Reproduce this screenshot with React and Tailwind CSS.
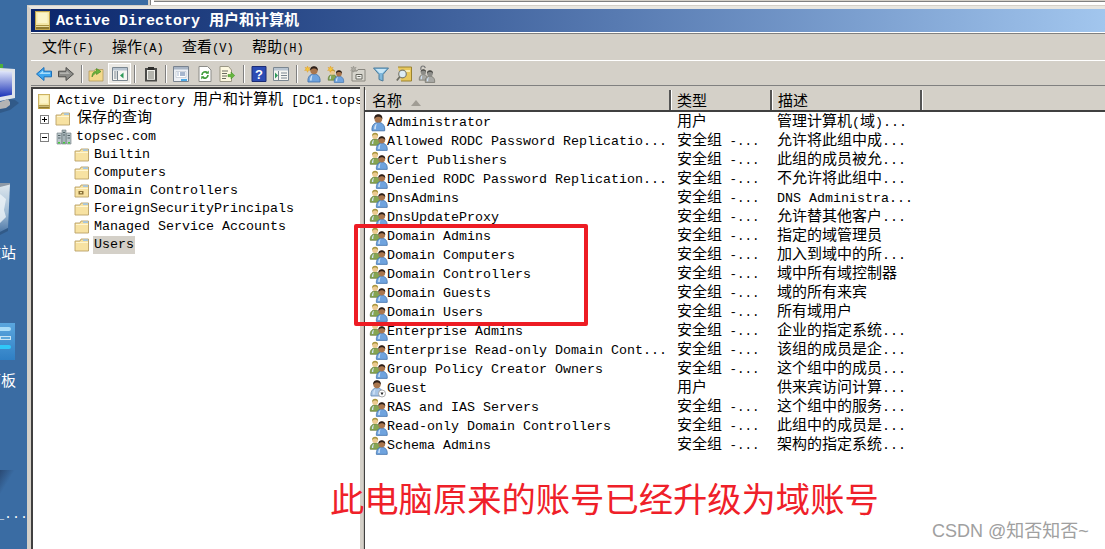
import React from 'react'

const groups = 'group'
const rows = [
  ['user', 'Administrator', '用户', '管理计算机(域)...'],
  [groups, 'Allowed RODC Password Replicatio...', '安全组 -...', '允许将此组中成...'],
  [groups, 'Cert Publishers', '安全组 -...', '此组的成员被允...'],
  [groups, 'Denied RODC Password Replication...', '安全组 -...', '不允许将此组中...'],
  [groups, 'DnsAdmins', '安全组 -...', 'DNS Administra...'],
  [groups, 'DnsUpdateProxy', '安全组 -...', '允许替其他客户...'],
  [groups, 'Domain Admins', '安全组 -...', '指定的域管理员'],
  [groups, 'Domain Computers', '安全组 -...', '加入到域中的所...'],
  [groups, 'Domain Controllers', '安全组 -...', '域中所有域控制器'],
  [groups, 'Domain Guests', '安全组 -...', '域的所有来宾'],
  [groups, 'Domain Users', '安全组 -...', '所有域用户'],
  [groups, 'Enterprise Admins', '安全组 -...', '企业的指定系统...'],
  [groups, 'Enterprise Read-only Domain Cont...', '安全组 -...', '该组的成员是企...'],
  [groups, 'Group Policy Creator Owners', '安全组 -...', '这个组中的成员...'],
  ['guest', 'Guest', '用户', '供来宾访问计算...'],
  [groups, 'RAS and IAS Servers', '安全组 -...', '这个组中的服务...'],
  [groups, 'Read-only Domain Controllers', '安全组 -...', '此组中的成员是...'],
  [groups, 'Schema Admins', '安全组 -...', '架构的指定系统...'],
]

const children = ['Builtin', 'Computers', 'Domain Controllers', 'ForeignSecurityPrincipals', 'Managed Service Accounts', 'Users']

// CJK runs are wider than the 8px latin cells
const Txt = ({ children: text }) =>
  text.split(/([\u4e00-\u9fff]+)/).map((part, i) =>
    i % 2 ? <span key={i} className="text-[15px]">{part}</span> : <React.Fragment key={i}>{part}</React.Fragment>
  )

const Svg = ({ children: kids, className = '' }) => (
  <svg viewBox="0 0 16 16" className={`w-4 h-4 shrink-0 overflow-visible ${className}`}>{kids}</svg>
)

const Person = ({ x = 0, y = 0, s = 1, body = '#6fa3de', edge = '#3c6ca6', skin = '#a9764e', hair = '#2c1f18' }) => (
  <g transform={`translate(${x} ${y}) scale(${s})`}>
    <path d="M1 16c-.6-5 2-8 6-8s6.600 3 6 8z" fill={body} stroke={edge} strokeWidth=".8" />
    <path d="M3 14.500c0-3 1-4.800 2.500-5.500-.6 2-.8 3.500-.8 5.500z" fill="#cfe2f6" />
    <circle cx="7" cy="4.500" r="3.700" fill={skin} />
    <path d="M3.200 4.800C2.800 1.500 5 .2 7 .2s4.200 1.300 3.800 4.600C10 3 8.400 2.500 7 2.500S4 3 3.200 4.800z" fill={hair} />
  </g>
)

const OliveMan = (props) => <Person body="#86a552" edge="#566f2e" skin="#ecca90" hair="#a8963e" {...props} />

const UserIcon = () => <Svg><Person x={1} y={-1} s={1.05} /></Svg>

const GuestIcon = () => (
  <Svg>
    <Person x={0} y={-1} s={1} body="#a9c6e6" edge="#5f86b0" />
    <circle cx="12" cy="12.500" r="3.500" fill="#fff" stroke="#8a8a8a" strokeWidth=".7" />
    <path d="M10.500 11.500h3L12 14.200z" fill="#222" />
  </Svg>
)

const GroupIcon = () => (
  <Svg>
    <OliveMan x={-.5} y={-1.500} s={.8} />
    <Person x={5.500} y={2} s={.9} />
  </Svg>
)

const Folder = ({ ou }) => (
  <Svg>
    <path d="M1 4h5l1-2h7.500v12H1z" fill="#f7e2a2" stroke="#b9a066" strokeWidth=".9" />
    <path d="M9 2.300h5v1.600H9z" fill="#9cc4e8" />
    <path d="M2 5h12v1H2z" fill="#fff6d2" />
    {ou && <path d="M4.500 8h5v3.500h-5z" fill="#8a7038" />}
    {ou && <path d="M6 9h2v1.200H6z" fill="#f2e6a8" />}
  </Svg>
)

const Book = ({ className = '' }) => (
  <svg viewBox="0 0 15 19" className={`shrink-0 ${className}`}>
    <path d="M0 0h15v19H0z" fill="#c2a64e" />
    <path d="M1 1h13v13H1z" fill="#f4e7a6" />
    <path d="M2.500 2h10v10h-10z" fill="#fbf4c8" />
    <path d="M1 14.500h13V18H1z" fill="#8f7a30" />
    <path d="M1 15h13v1H1z" fill="#e8dca0" />
  </svg>
)

const Domain = () => (
  <Svg>
    <path d="M6 1h4v14H6z" fill="#a6b4b8" stroke="#6c7a7e" strokeWidth=".6" />
    <path d="M1 4h4.500v11H1z" fill="#b8c4c8" stroke="#6c7a7e" strokeWidth=".6" />
    <path d="M10.500 4H15v11h-4.500z" fill="#b8c4c8" stroke="#6c7a7e" strokeWidth=".6" />
    <path d="M2 6h2.500v1H2zM2 8.500h2.500v1H2zM7 3h2v1H7zM7 5.500h2v1H7zM11.500 6H14v1h-2.500zM11.500 8.500H14v1h-2.500z" fill="#546468" />
    <path d="M2 13h2v1.500H2zM7 13h2v1.500H7zM12 13h2v1.500h-2z" fill="#45c83c" />
  </Svg>
)

const Box = ({ minus }) => (
  <div className="w-[9px] h-[9px] border border-[#808080] bg-white flex items-center justify-center shrink-0 relative">
    <div className="w-[5px] h-px bg-black" />
    {!minus && <div className="absolute w-px h-[5px] bg-black" />}
  </div>
)

const Back = () => (
  <Svg><path d="M.5 8 8 1.500v3.700h7.500v5.600H8v3.700z" fill="#3ea6ee" stroke="#1c6fb8" /><path d="M3 8l4-3.400v2h7V8z" fill="#a6dcfa" /></Svg>
)
const Forward = () => (
  <Svg><path d="M15.500 8 8 1.500v3.700H.5v5.600H8v3.700z" fill="#8c8c88" stroke="#4e4e4c" /><path d="M2 6.500h6.500V4.500L12 8H2z" fill="#b4b4b0" /></Svg>
)
const UpFolder = () => (
  <Svg>
    <path d="M1 5h5l1-1.500h8V15H1z" fill="#f4d98c" stroke="#b49a58" strokeWidth=".8" />
    <path d="M4 11C4 7 6 5.500 8.500 5V2.500L13 5.500 8.500 8.500V6.800C7 7.200 5.500 8.500 4 11z" fill="#6cb43c" stroke="#3f8420" strokeWidth=".6" />
  </Svg>
)
const Pane = ({ mark = '#2e9a58', dir = 'left', tone = '#7a8690' }) => (
  <Svg>
    <path d="M.5 1.500h15v13H.5z" fill="#f6f6f2" stroke={tone} />
    <path d="M1 2h14v2.500H1z" fill="#b8c4d0" />
    <path d="M5.500 5v9" stroke={tone} />
    <path d={dir === 'left' ? 'M11.500 6.500v6L8 9.500z' : 'M2 6.500v6l3-3z'} fill={mark} />
    {dir === 'left'
      ? <path d="M2 6h2.500M2 8h2.500M2 10h2.500M2 12h2.500" stroke="#7a8690" />
      : <path d="M8 7h6M8 9.500h6M8 12h6" stroke="#7a8690" />}
  </Svg>
)
const Clipboard = () => (
  <Svg>
    <path d="M2 2h12v13.500H2z" fill="#4a4a48" />
    <path d="M4 4h8v9.800H4z" fill="#f2f2ec" />
    <path d="M5 1h6v3H5z" fill="#2e2e2c" />
    <path d="M5 6h6M5 8h6M5 10h6M5 12h6" stroke="#77776f" />
  </Svg>
)
const Props = () => (
  <Svg>
    <path d="M.5.500h15v15H.5z" fill="#eef1f6" stroke="#78828e" />
    <path d="M1 1h14v2.500H1z" fill="#a8b4c4" />
    <path d="M3 5.500h10v6H3z" fill="#fff" stroke="#b4bcc8" strokeWidth=".6" />
    <path d="M4.500 7h1M7 7h5M4.500 9h1M7 9h5" stroke="#4c6c9c" />
    <path d="M8 13h6v2H8z" fill="#4aa8e6" />
  </Svg>
)
const Refresh = () => (
  <Svg>
    <path d="M2 .500h8.500L14 4v11.500H2z" fill="#fff" stroke="#8c8c88" />
    <path d="M5 9a3.200 3.200 0 0 1 5.500-2.200M11 9a3.200 3.200 0 0 1-5.500 2.200" fill="none" stroke="#3f9c3a" strokeWidth="1.700" />
    <path d="M11.800 4.600v3.200H8.600zM4.200 13.400v-3.200h3.200z" fill="#3f9c3a" />
  </Svg>
)
const Export = () => (
  <Svg>
    <path d="M1 .500h8.500L12.500 4v11.500H1z" fill="#fdf8e0" stroke="#9a9684" />
    <path d="M3 5h6M3 7.500h5M3 10h5M3 12.500h4" stroke="#6c6c60" />
    <path d="M9 8.500h3V6l3.700 3.500L12 13v-2.300H9z" fill="#66b83e" stroke="#3e8a22" strokeWidth=".5" />
  </Svg>
)
const Help = () => (
  <Svg>
    <path d="M1 .500h14v15H1z" fill="#2c4cb4" stroke="#1c2c74" />
    <text x="8" y="13" textAnchor="middle" fontSize="13" fontWeight="700" fontFamily="Liberation Sans" fill="#fff">?</text>
  </Svg>
)
const Spark = ({ fill = '#f5c63a', edge = '#dc8f1a' }) => (
  <path d="M3.500 0 4.300 2 6.200 1.300 5 3 6.400 4.400 4.500 4.300 3.500 6.300 2.700 4.300.6 4.400 2.100 3 1 1.300 2.900 2z" fill={fill} stroke={edge} strokeWidth=".4" />
)
const NewUser = () => (
  <Svg><Person x={3} y={0} s={1} /><Spark /></Svg>
)
const NewGroup = () => (
  <Svg><OliveMan x={.5} y={3} s={.7} /><Person x={6.500} y={4} s={.78} /><Spark /></Svg>
)
const NewOU = () => (
  <Svg>
    <path d="M2 5h5l1-1.500h7V15H2z" fill="#d6d4cc" stroke="#8a8880" />
    <path d="M6 8.500h6V13H6z" fill="#f4f4f0" stroke="#66665e" />
    <path d="M7.500 10h3v1h-3z" fill="#66665e" />
    <Spark fill="#aeaca4" edge="#807e76" />
  </Svg>
)
const Filter = () => (
  <Svg>
    <path d="M.5 2h15L10 8.500V15l-4-1.500V8.500z" fill="#7fb8dc" stroke="#4c7c9c" />
    <path d="M2.500 3h11L9.500 7h-3z" fill="#c8e6f6" />
  </Svg>
)
const Find = () => (
  <Svg>
    <path d="M2 1h13.500v14H5" fill="#e8c85c" stroke="#9a8230" />
    <path d="M9 4h5v2H9z" fill="#f8ecb0" />
    <circle cx="6.500" cy="8" r="3.800" fill="#dcecf4" stroke="#7c7c70" strokeWidth="1.200" />
    <path d="M3.800 10.800.8 14.500" stroke="#6c6c60" strokeWidth="1.800" />
  </Svg>
)
const GrayGroup = () => (
  <Svg>
    <path d="M3 4c-.8-3 .8-4 2-4s2 .8 2.300 2" fill="none" stroke="#777" strokeWidth="1.200" />
    <Person x={.5} y={3} s={.7} body="#a8a8a4" edge="#66665e" skin="#8c8c88" hair="#4c4c48" />
    <Person x={6.500} y={4} s={.78} body="#a8a8a4" edge="#66665e" skin="#8c8c88" hair="#4c4c48" />
  </Svg>
)

const Sep = ({ className }) => <div className={`w-[2px] h-[18px] border-l border-r border-l-[#808080] border-r-white shrink-0 ${className}`} />

const Desktop = () => (
  <aside className="w-[27px] shrink-0 relative overflow-hidden">
    {/* desktop icons are cut off by the window */}
    <svg viewBox="0 0 20 50" className="absolute left-0 top-[64px] w-5 h-[50px]">
      <defs>
        <linearGradient id="screen" x1="0" y1="0" x2="0" y2="1">
          <stop offset="0" stopColor="#e0e6fa" />
          <stop offset="1" stopColor="#1c34b8" />
        </linearGradient>
      </defs>
      <path d="M0 0h3v4H0z" fill="#4caf3c" />
      <path d="M0 4 15 5v29L0 37z" fill="#dfe4ea" />
      <path d="M0 7l12 .7v23L0 33z" fill="url(#screen)" />
      <path d="M0 38l8-3 7 1 4 3-9 7-10 3z" fill="#2c4e78" opacity=".6" />
      <path d="M0 38l8-3 2 3v3l-4 3-6 1z" fill="#b4b4b4" />
    </svg>
    <svg viewBox="0 0 11 55" className="absolute left-0 top-[182px] w-[11px] h-[55px]">
      <defs>
        <linearGradient id="bin" x1="0" y1="0" x2="0" y2="1">
          <stop offset="0" stopColor="#dfe8ee" />
          <stop offset=".6" stopColor="#9fbbd4" />
          <stop offset="1" stopColor="#4f79a8" />
        </linearGradient>
      </defs>
      <path d="M0 2h10L8 46 0 50z" fill="url(#bin)" />
      <path d="M0 1h10v1.500L0 5z" fill="#8d99a6" />
      <path d="M0 12l6 5-2 11 2 7-6 6z" fill="#eef4f8" opacity=".8" />
      <path d="M0 50l8-4v3l-8 4z" fill="#2e527c" opacity=".7" />
    </svg>
    <span className="absolute right-[11px] top-[245px] leading-[20px] text-white text-[15px] whitespace-nowrap">回收站</span>
    <div className="absolute left-0 top-[323px] w-[15px] h-[37px] bg-gradient-to-b from-[#5aa6de] to-[#2f7fc4] flex flex-col gap-[5px] pt-[4px]">
      <div className="w-[11px] h-[4px] bg-[#a8dcf8] rounded-r-sm" />
      <div className="w-[11px] h-[4px] bg-[#5ca8dc] border border-[#c8e4f4]" />
      <div className="w-[11px] h-[4px] bg-[#30c8f8] rounded-r-sm" />
    </div>
    <span className="absolute right-[11px] top-[373px] leading-[20px] text-white text-[15px] whitespace-nowrap">控制面板</span>
    <div className="absolute left-0 top-[470px] w-[15px] h-[25px] bg-gradient-to-br from-transparent via-[#3a6ca3] to-[#2a4a74] rotate-180" />
    <span className="absolute left-[-4px] top-[507px] leading-[16px] text-white text-[13.330px] whitespace-nowrap">_...</span>
  </aside>
)

export default function App() {
  const toolbar = [
    [Back, 'ml-[5px]'], [Forward, 'ml-[6px]'], [null, 'ml-[7px]'], [UpFolder, 'ml-[5px]'],
  ]
  const toolbar2 = [
    [null, 'ml-[3px]'], [Clipboard, 'ml-[7px]'], [null, 'ml-[6px]'], [Props, 'ml-[6px]'], [Refresh, 'ml-[8px]'],
    [Export, 'ml-[6px]'], [null, 'ml-[8px]'], [Help, 'ml-[6px]'], [() => <Pane dir="right" />, 'ml-[6px]'],
    [null, 'ml-[7px]'], [NewUser, 'ml-[6px]'], [NewGroup, 'ml-[7px]'], [NewOU, 'ml-[7px]'], [Filter, 'ml-[7px]'],
    [Find, 'ml-[7px]'], [GrayGroup, 'ml-[6px]'],
  ]
  const renderTools = (items) =>
    items.map(([Icon, ml], i) =>
      Icon ? <div key={i} className={ml}><Icon /></div> : <Sep key={i} className={ml} />
    )

  return (
    <div className="w-[1105px] h-[549px] relative flex overflow-hidden bg-[#3a6ca3] text-black text-[13.330px] font-['Liberation_Mono','Noto_Sans_CJK_SC',monospace]">
      <Desktop />

      <div className="flex-1 min-w-0 flex flex-col">
        {/* edge of the window behind */}
        <div className="h-[5px] flex shrink-0">
          <div className="w-[121px]" />
          <div className="w-[2px] bg-[#d4d0c8]" />
          <div className="w-[1px] bg-[#808080]" />
          <div className="w-[3px] bg-white" />
          <div className="flex-1 flex flex-col">
            <div className="h-[1px] bg-[#d4d0c8]" />
            <div className="h-[1px] bg-[#808080]" />
            <div className="flex-1 bg-white" />
          </div>
        </div>

        <section className="flex-1 min-h-0 flex flex-col bg-[#d4d0c8] border-t border-l border-[#d4d0c8]">
          <div className="flex-1 min-h-0 flex flex-col border-t-[3px] border-l-[3px] border-t-[#e8e6e0] border-l-[#d4d0c8]">
            <header className="h-[23px] shrink-0 flex items-center pl-[4px] bg-gradient-to-r from-[#0a246a] to-[#a2c6ee]">
              <Book className="w-[15px] h-[19px]" />
              <span className="ml-[6px] pt-[2px] text-white font-bold text-[15px] leading-[21px] whitespace-nowrap">Active Directory 用户和计算机</span>
            </header>

            <div className="h-px shrink-0 bg-white" />
            <div className="h-px shrink-0 bg-[#808080]" />

            <nav className="h-[27px] shrink-0 flex items-center pl-[11px] gap-[19px] border-b border-white">
              {['文件(F)', '操作(A)', '查看(V)', '帮助(H)'].map((m) => (
                <span key={m} className="w-[51px] pt-[4px] whitespace-nowrap text-[12px] leading-[20px]"><Txt>{m}</Txt></span>
              ))}
            </nav>

            <div className="h-[25px] shrink-0 flex items-center pt-px border-b border-[#808080]">
              {renderTools(toolbar)}
              <div className="ml-[4px] w-[23px] h-[21px] border border-white bg-[#ebe9e4] flex items-center justify-center shrink-0">
                <Pane />
              </div>
              {renderTools(toolbar2)}
            </div>

            <div className="flex-1 min-h-0 flex pt-[1px]">
              {/* tree */}
              <div className="w-[329px] shrink-0 bg-white border-t-2 border-l-2 border-[#404040] pt-[3px] overflow-hidden">
                <div className="h-[18px] flex items-center pl-[5px] whitespace-nowrap">
                  <Book className="w-[12px] h-[15px]" />
                  <span className="ml-[7px] leading-[18px]"><Txt>Active Directory 用户和计算机 [DC1.tops</Txt></span>
                </div>
                <div className="h-[18px] flex items-center pl-[7px]">
                  <Box />
                  <div className="ml-[6px]"><Folder /></div>
                  <span className="ml-[6px] leading-[18px]"><Txt>保存的查询</Txt></span>
                </div>
                <div className="h-[18px] flex items-center pl-[7px]">
                  <Box minus />
                  <div className="ml-[7px]"><Domain /></div>
                  <span className="ml-[4px] leading-[18px]">topsec.com</span>
                </div>
                {children.map((c) => (
                  <div key={c} className="h-[18px] flex items-center pl-[41px]">
                    <Folder ou={c === 'Domain Controllers'} />
                    <span className={`ml-[3px] px-px leading-[18px] ${c === 'Users' ? 'bg-[#d4d0c8]' : ''}`}>{c}</span>
                  </div>
                ))}
              </div>

              <div className="w-[4px] shrink-0 border-r border-[#c0bcb4]" />

              {/* list */}
              <div className="flex-1 min-w-0 bg-white border-l border-[#404040] flex flex-col">
                <div className="h-[25px] shrink-0 pt-[3px] flex bg-[#d4d0c8] border-b-2 border-b-[#404040]">
                  <div className="w-[306px] shrink-0 border-r-2 border-r-[#555] border-l border-l-white pl-[6px] pt-[6px] leading-[14px] flex items-center">
                    <span className="text-[15px]">名称</span>
                    <div className="ml-[9px] w-0 h-0 border-x-[5px] border-x-transparent border-b-[6px] border-b-[#a09c94]" />
                  </div>
                  <div className="w-[101px] shrink-0 border-r-2 border-r-[#555] border-l border-l-white pl-[5px] pt-[6px] leading-[14px] text-[15px]">类型</div>
                  <div className="w-[150px] shrink-0 border-r-2 border-r-[#555] border-l border-l-white pl-[5px] pt-[6px] leading-[14px] text-[15px]">描述</div>
                  <div className="flex-1 border-l border-l-white" />
                </div>
                <div className="pt-[1px]">
                  {rows.map(([kind, name, type, desc]) => (
                    <div key={name} className="h-[19px] flex items-center whitespace-nowrap">
                      <div className="w-[306px] shrink-0 pl-[5px] flex items-center">
                        {kind === 'user' ? <UserIcon /> : kind === 'guest' ? <GuestIcon /> : <GroupIcon />}
                        <span className="ml-[1px] leading-[19px]">{name}</span>
                      </div>
                      <div className="w-[100px] shrink-0 pl-[6px] text-[12.500px] leading-[19px]"><Txt>{type}</Txt></div>
                      <div className="pl-[6px] leading-[19px]"><Txt>{desc}</Txt></div>
                    </div>
                  ))}
                </div>
              </div>
            </div>
          </div>
        </section>
      </div>

      {/* annotations on top of the screenshot */}
      <div className="absolute left-[354px] top-[224px] w-[234px] h-[102px] border-4 border-[#ed1c24] rounded-[2px]" />
      <div className="absolute left-[330px] top-[472px] text-[34.300px] leading-[50px] text-[#ef2029] whitespace-nowrap font-['Noto_Sans_CJK_SC',sans-serif]">此电脑原来的账号已经升级为域账号</div>
      <div className="absolute left-[932px] top-[521px] text-[18px] leading-[20px] text-[#a0a0a0] whitespace-nowrap font-['Liberation_Sans','Noto_Sans_CJK_SC',sans-serif]">CSDN @知否知否~</div>
    </div>
  )
}
